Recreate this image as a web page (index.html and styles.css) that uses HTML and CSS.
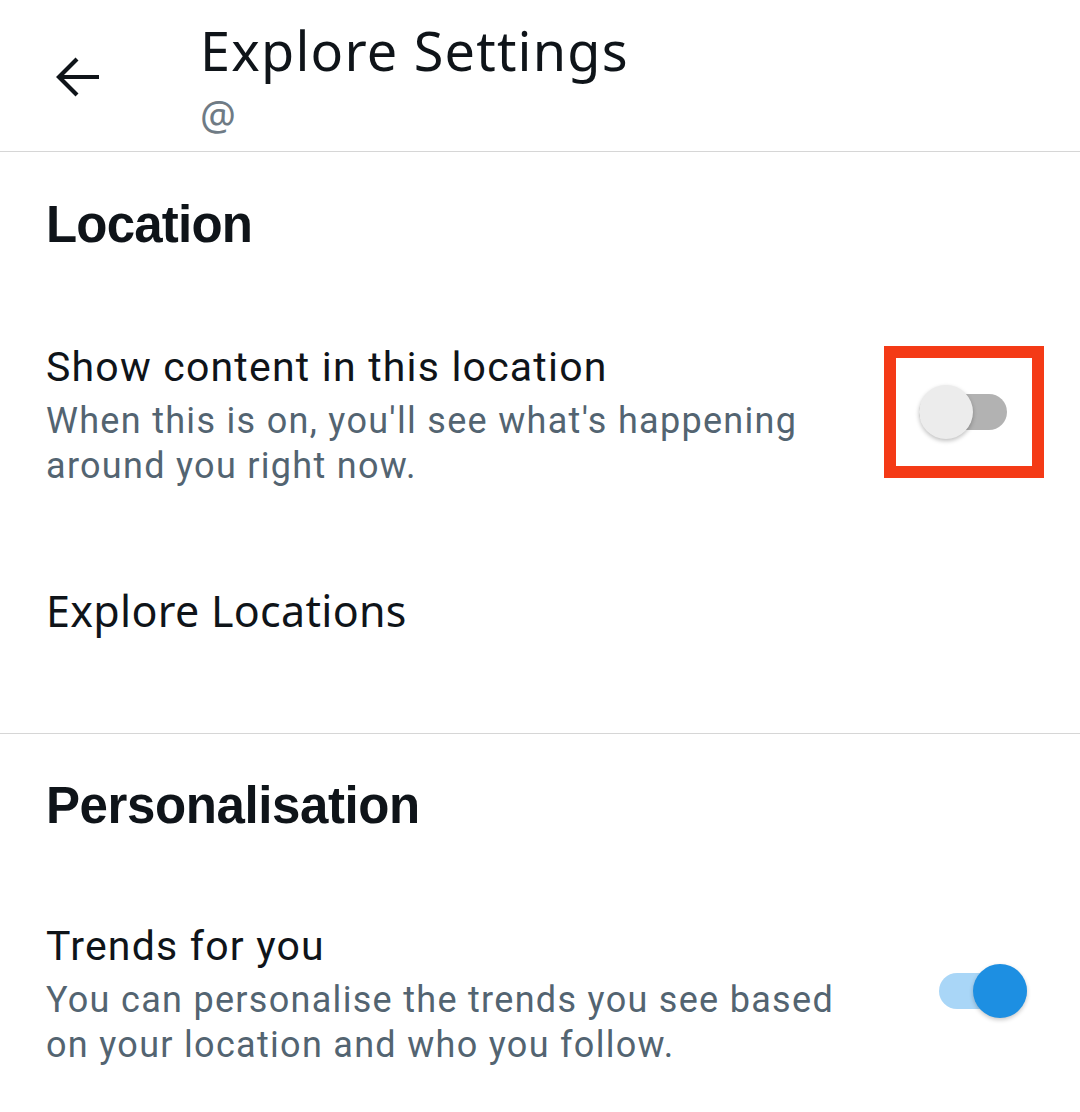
FILE: index.html
```html
<!DOCTYPE html>
<html lang="en">
<head>
<meta charset="utf-8">
<title>Explore Settings</title>
<link rel="stylesheet" href="styles.css">
</head>
<body>
<div class="page">
  <header class="topbar">
    <div class="back">
      <svg width="46" height="44" viewBox="0 0 46 44" aria-hidden="true">
        <path d="M44 22H5M22 4L4 22L22 40" fill="none" stroke="#0f1419" stroke-width="4.2" stroke-linecap="butt" stroke-linejoin="miter"/>
      </svg>
    </div>
    <div class="titles">
      <div class="title">Explore Settings</div>
      <div class="handle">@</div>
    </div>
  </header>

  <section class="section">
    <h2 class="heading heading-location">Location</h2>
    <div class="row row-location">
      <div class="row-text">
        <div class="row-title">Show content in this location</div>
        <div class="row-desc">When this is on, you'll see what's happening<br>around you right now.</div>
      </div>
      <div class="highlight">
        <div class="switch off"><span class="track"></span><span class="knob"></span></div>
      </div>
    </div>
    <div class="link-row">Explore Locations</div>
  </section>

  <section class="section section-personal">
    <h2 class="heading heading-personal">Personalisation</h2>
    <div class="row row-trends">
      <div class="row-text">
        <div class="row-title">Trends for you</div>
        <div class="row-desc">You can personalise the trends you see based<br>on your location and who you follow.</div>
      </div>
      <div class="switch on"><span class="track"></span><span class="knob"></span></div>
    </div>
  </section>
</div>
</body>
</html>
```

FILE: styles.css
```css
html, body {
  margin: 0;
  padding: 0;
  background: #ffffff;
}

.page {
  width: 1080px;
  height: 1112px;
  overflow: hidden;
  color: #0f1419;
  font-family: "Noto Sans", "Open Sans", sans-serif;
}

.topbar {
  display: flex;
  align-items: flex-start;
  height: 152px;
  box-sizing: border-box;
  border-bottom: 1px solid #d6d6d6;
}

.back {
  width: 46px;
  height: 44px;
  margin-left: 55px;
  margin-top: 55px;
}

.back svg {
  display: block;
}

.titles {
  margin-left: 99px;
  padding-top: 19px;
}

.title {
  font-size: 54px;
  line-height: 62px;
  letter-spacing: 1.2px;
  font-weight: 400;
  color: #0f1419;
}

.handle {
  font-size: 40px;
  line-height: 44px;
  margin-top: 12px;
  color: #6f7b85;
}

.section {
  border-bottom: 1px solid #d6d6d6;
  padding-left: 46px;
}

.section-personal {
  border-bottom: none;
}

.heading {
  margin: 0;
  font-family: "Liberation Sans", Arial, sans-serif;
  font-weight: 700;
  font-size: 51px;
  line-height: 60px;
  color: #0f1419;
}

.heading-location {
  padding-top: 43px;
  letter-spacing: -0.8px;
}

.heading-personal {
  padding-top: 42px;
  letter-spacing: -0.4px;
}

.row {
  display: flex;
  align-items: center;
  justify-content: space-between;
}

.row-location {
  margin-top: 88px;
  padding-right: 36px;
}

.row-trends {
  margin-top: 86px;
  padding-right: 53px;
}

.row-text {
  font-family: Roboto, "Noto Sans", sans-serif;
}

.row-title {
  font-size: 41px;
  line-height: 48px;
  letter-spacing: 1.2px;
  color: #0f1419;
}

.row-desc {
  font-size: 36px;
  line-height: 45px;
  letter-spacing: 1.3px;
  margin-top: 8px;
  color: #536471;
}

.link-row {
  font-size: 43px;
  line-height: 52px;
  letter-spacing: 0.3px;
  padding-top: 96px;
  padding-bottom: 96px;
  color: #0f1419;
}

.highlight {
  width: 136px;
  height: 108px;
  margin-top: -9px;
  border: 12px solid #f43a16;
  display: flex;
  align-items: center;
  justify-content: center;
  padding-right: 2px;
  box-sizing: content-box;
  width: 134px;
}

.switch {
  position: relative;
  width: 88px;
  height: 54px;
  flex: none;
}

.switch.on {
  margin-top: -8px;
}

.switch .track {
  position: absolute;
  left: 0;
  right: 0;
  top: 9px;
  height: 36px;
  border-radius: 18px;
}

.switch .knob {
  position: absolute;
  top: 0;
  width: 54px;
  height: 54px;
  border-radius: 50%;
}

.switch.off .track {
  background: #b2b2b2;
}

.switch.off .knob {
  left: 0;
  background: #ececec;
  box-shadow: 0 2px 4px rgba(0, 0, 0, 0.25);
}

.switch.on .track {
  background: #a9d6f7;
}

.switch.on .knob {
  right: 0;
  background: #1d8fe2;
  box-shadow: 0 2px 4px rgba(0, 0, 0, 0.22);
}
```
